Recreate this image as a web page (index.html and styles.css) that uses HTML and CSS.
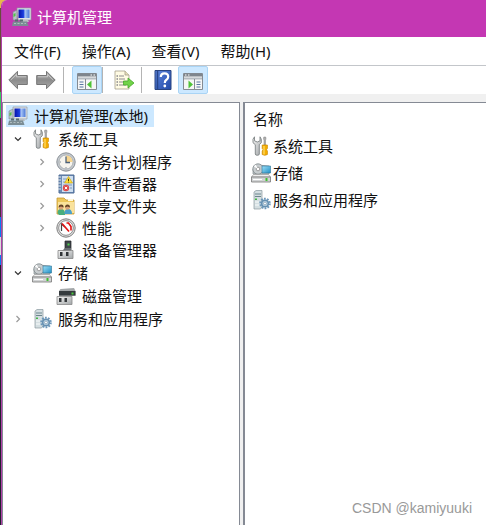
FILE: index.html
```html
<!DOCTYPE html>
<html lang="zh-CN">
<head>
    <meta charset="UTF-8">
    <meta name="viewport" content="width=device-width, initial-scale=1.0">
    <title>计算机管理</title>
    <link rel="stylesheet" href="styles.css">
</head>
<body>
    <svg class="sprite" aria-hidden="true">
        <defs>
            <linearGradient id="metal" x1="0" y1="0" x2="1" y2="1">
                <stop offset="0" stop-color="#f4f4f4"/>
                <stop offset="1" stop-color="#a2a6a8"/>
            </linearGradient>
            <linearGradient id="screen" x1="0" y1="0" x2="1" y2="0">
                <stop offset="0" stop-color="#0712a8"/>
                <stop offset="0.45" stop-color="#1c3fe0"/>
                <stop offset="0.6" stop-color="#a9c6f5"/>
                <stop offset="1" stop-color="#4a78d8"/>
            </linearGradient>
            <linearGradient id="arrow" x1="0" y1="0" x2="0" y2="1">
                <stop offset="0" stop-color="#b5b5b5"/>
                <stop offset="0.5" stop-color="#8c8c8c"/>
                <stop offset="1" stop-color="#a8a8a8"/>
            </linearGradient>
            <linearGradient id="book" x1="0" y1="0" x2="1" y2="1">
                <stop offset="0" stop-color="#5f86dc"/>
                <stop offset="1" stop-color="#2149a8"/>
            </linearGradient>
            <linearGradient id="cyan" x1="0" y1="0" x2="1" y2="1">
                <stop offset="0" stop-color="#9fe0f7"/>
                <stop offset="1" stop-color="#1f8fc6"/>
            </linearGradient>
        </defs>

        <symbol id="computer" viewBox="0 0 20 20">
            <path d="M1 5l4-2v10H1z" fill="#b9c3c8" stroke="#7d888e" stroke-width=".6"/>
            <path d="M1.500 7l2-1v3l-2 1z" fill="#55c04a"/>
            <path d="M5 1h14v12H6z" fill="#dfe3e6" stroke="#9299a0" stroke-width=".7"/>
            <path d="M6.500 2.500h11v8.500h-11z" fill="url(#screen)"/>
            <path d="M10 13h6l1 2H9z" fill="#b8bec2"/>
            <path d="M1 14.500h14l1.500 4.500H0z" fill="#7b8d94"/>
            <path d="M3 12.500h3v2H3zM8 12.500h3v2H8z" fill="#596b72"/>
            <path d="M2 16.500h12" stroke="#aebcbf" stroke-dasharray="2 1.500"/>
        </symbol>

        <symbol id="tools" viewBox="0 0 20 20">
            <path d="M3.500 .8L2 3.200v3.500l2.300 2V18q0 1.300 2 1.300t2-1.300V8.700l2-2V3.200L9 .8v4L6.300 6 3.500 4.800z" fill="url(#metal)" stroke="#7e8384" stroke-width=".9"/>
            <path d="M12.800 1h1.900l.3 2-.5 1v5.500h-1.500V4l-.5-1z" fill="#b0b0b0" stroke="#808080" stroke-width=".5"/>
            <path d="M11.200 9h5.200v3.500l-.9 1.200.9 1.300v3.500q-2.600 1.600-5.200 0V15l.9-1.300-.9-1.200z" fill="#f5ae00" stroke="#c98600" stroke-width=".7"/>
            <path d="M13 10v8.500" stroke="#ffe584"/>
        </symbol>

        <symbol id="clock" viewBox="0 0 20 20">
            <circle cx="10" cy="10" r="9.200" fill="#c4c9ce" stroke="#898f95"/>
            <circle cx="10" cy="10" r="7" fill="#f7f5ee" stroke="#9ca2a8" stroke-width=".7"/>
            <path d="M10 10V3.400a6.600 6.600 0 0 1 6.600 6.600z" fill="#f7d58e"/>
            <path d="M10 4.500V10.500h4" fill="none" stroke="#4b6079" stroke-width="1.300"/>
            <path d="M10 15v1.500M3.700 10h1.300" stroke="#8994a0"/>
        </symbol>

        <symbol id="events" viewBox="0 0 20 20">
            <path d="M3 1h15v18H3z" fill="#6c8cb6" stroke="#4e6c96"/>
            <path d="M6 2h11v16H6z" fill="#cfdff0"/>
            <path d="M7 5h4M7 8h3M7 11h9M7 14h2M14 14h2" stroke="#7e9bbd"/>
            <path d="M2 3h3M2 6h3M2 9h3M2 12h3M2 15h3" stroke="#e4e9ee"/>
            <path d="M12.500 2.500l4 6.500h-8z" fill="#ffe03b" stroke="#c99d00" stroke-width=".6"/>
            <path d="M12.500 4.800v2.200M12.500 7.700v.7" stroke="#4c4100"/>
            <circle cx="10" cy="14" r="3.200" fill="#dd4c4c"/>
            <path d="M8.800 12.800l2.400 2.400M11.200 12.800l-2.400 2.400" stroke="#fff"/>
        </symbol>

        <symbol id="shared" viewBox="0 0 20 20">
            <path d="M1 4V2h7l2 2h8v14H1z" fill="#edc75b" stroke="#c79b32" stroke-width=".8"/>
            <path d="M2 6h16v11H2z" fill="#fae29b"/>
            <path d="M12 3h5v2h-5z" fill="#fff8dd"/>
            <path d="M1.500 17q0-4 3.500-4t4 4v2h-6z" fill="#48ae7c"/>
            <path d="M8.500 17q0-4 3.500-4t4 4v1h-7.500z" fill="#4aa0c9"/>
            <circle cx="5" cy="11.500" r="2.200" fill="#dba278"/>
            <circle cx="11.500" cy="11.500" r="2.200" fill="#dba278"/>
            <path d="M2.600 11.500q0-3 2.600-3t2.400 3L5 10.500zM9 11.500q0-3 2.500-3t2.500 3l-2.500-1z" fill="#644326"/>
        </symbol>

        <symbol id="gauge" viewBox="0 0 20 20">
            <circle cx="10" cy="10" r="9.200" fill="#dcdcdc" stroke="#808080"/>
            <circle cx="10" cy="10" r="7.300" fill="#fff" stroke="#777" stroke-width=".8"/>
            <path d="M5.500 13V6l3.500 3" fill="none" stroke="#444" stroke-width="1.200"/>
            <path d="M6 5.500l7 8" stroke="#e21212" stroke-width="1.600"/>
            <path d="M10.500 5h2l2.500 3.500v4" fill="none" stroke="#e21212" stroke-width="1.600"/>
        </symbol>

        <symbol id="device" viewBox="0 0 20 20">
            <path d="M9 1h6v9H9z" fill="#40464b" stroke="#1f2326" stroke-width=".7"/>
            <path d="M11.500 3.500h2v2h-2z" fill="#4fd34f"/>
            <path d="M9 8l-3 3h9V8z" fill="#696f73"/>
            <path d="M2 10.500h15v8H2z" fill="url(#metal)" stroke="#858585" stroke-width=".8"/>
            <path d="M4 12h2.500v4H4zM10 12h2.500v4H10z" fill="#303437"/>
        </symbol>

        <symbol id="storage" viewBox="0 0 20 20">
            <path d="M2 6l4-4 12 1v8H2z" fill="#c1c6c8" stroke="#858c90" stroke-width=".7"/>
            <circle cx="7" cy="6" r="5.200" fill="#c8cdcf" stroke="#7e8689" stroke-width=".8"/>
            <circle cx="7" cy="6" r="1.800" fill="#fff" stroke="#808080" stroke-width=".7"/>
            <path d="M3 3.500l4 2.500-2.500-4.500z" fill="#fff"/>
            <path d="M11 3h8.500v7H11z" fill="url(#cyan)" stroke="#2d7397" stroke-width=".6"/>
            <path d="M2.500 11.500h15l2 2.500H.5z" fill="#f0f0f0" stroke="#8c8c8c" stroke-width=".6"/>
            <path d="M.5 14h19v5H.5z" fill="#d2d4d5" stroke="#777" stroke-width=".8"/>
            <path d="M2 16.500h9" stroke="#fff"/>
            <path d="M14.500 15h2v3h-2z" fill="#42bf32"/>
        </symbol>

        <symbol id="disk" viewBox="0 0 20 20">
            <path d="M4.500 3L18 2l1.500 3v5H3V5z" fill="#a3a7a9"/>
            <path d="M3 5h16.500v4.500H3z" fill="#343a3d"/>
            <path d="M15.500 6.500h2v2h-2z" fill="#49cc3c"/>
            <path d="M1 10.500h15v8H1z" fill="url(#metal)" stroke="#898989" stroke-width=".8"/>
            <path d="M3 12h2.500v4H3zM8.500 12H11v4H8.500z" fill="#34383b"/>
        </symbol>

        <symbol id="services" viewBox="0 0 20 20">
            <path d="M3 2l2-1.500h6V17l-1.500 2H3z" fill="#d4dee1" stroke="#8a999f" stroke-width=".7"/>
            <path d="M4 4h6M4 6.500h6" stroke="#6d868e"/>
            <path d="M4 8.500h2v1.500H4z" fill="#43b847"/>
            <path d="M4 12h6M4 15h5" stroke="#f8fbfb"/>
            <circle cx="14" cy="13.500" r="4.800" fill="none" stroke="#6c97ba" stroke-width="2" stroke-dasharray="1.800 1.200"/>
            <circle cx="14" cy="13.500" r="3.300" fill="#c1d7e7" stroke="#6690b1" stroke-width="1.600"/>
            <circle cx="14" cy="13.500" r="1.400" fill="#fff" stroke="#6b89a1" stroke-width=".6"/>
        </symbol>

        <symbol id="back" viewBox="0 0 20 20">
            <path d="M.8 10L9.500 1.300V5.500H19.300v9H9.500v4.200z" fill="url(#arrow)" stroke="#777"/>
            <path d="M2.800 10l5.700-5.500v2.300h9.500" fill="none" stroke="#d0d0d0" stroke-width=".8"/>
        </symbol>

        <symbol id="export" viewBox="0 0 20 20">
            <path d="M1 1h10l4 4v14H1z" fill="#fffbe3" stroke="#a4a08a" stroke-width=".8"/>
            <path d="M11 1v4h4" fill="#e5deb9" stroke="#a4a08a" stroke-width=".8"/>
            <path d="M5 6h5M5 9h6M5 12h5M5 15h7" stroke="#8c8b91"/>
            <path d="M2.500 6H4M2.500 9H4M2.500 12H4M2.500 15H4" stroke="#4d4d61"/>
            <path d="M9.500 11H14V8l6 5-6 5v-3H9.500z" fill="#71d348" stroke="#48a62b" stroke-width=".8"/>
        </symbol>

        <symbol id="help" viewBox="0 0 20 20">
            <path d="M2 .5h16v19H2z" fill="url(#book)" stroke="#294480"/>
            <path d="M4.500 1v18" stroke="#274589" stroke-width="1.500"/>
            <path d="M7.800 7q0-3.700 3.700-3.700t3.700 3.400q0 2-2 3.300-1.400.9-1.400 2.900" fill="none" stroke="#fff" stroke-width="2.200"/>
            <circle cx="11.800" cy="16" r="1.400" fill="#fff"/>
        </symbol>

        <symbol id="panel" viewBox="0 0 20 20">
            <path d="M.5 3.500h19v16H.5z" fill="#f6f6f6" stroke="#858b92"/>
            <path d="M1 3.500h18v3H1z" fill="#7e858d"/>
            <path d="M1 7.500h18v2H1z" fill="#b5bbc1"/>
            <path d="M13.500 5H15M16.500 5H18" stroke="#fff"/>
            <path d="M8.500 9v10" stroke="#858b92"/>
            <path d="M2.500 12h4M2.500 14.500h4M2.500 17h4" stroke="#5875a1"/>
            <path d="M14.500 10.500v8l-4.500-4z" fill="#4fc336"/>
        </symbol>

        <symbol id="chevron" viewBox="0 0 10 10">
            <path d="M3.500 2l3 3-3 3" fill="none" stroke="currentColor" stroke-width="1.200"/>
        </symbol>
    </svg>

    <div class="window">
        <header class="titlebar">
            <svg class="icon"><use href="#computer"/></svg>
            <h1>计算机管理</h1>
        </header>

        <nav class="menubar">
            <button type="button">文件(F)</button>
            <button type="button">操作(A)</button>
            <button type="button">查看(V)</button>
            <button type="button">帮助(H)</button>
        </nav>

        <div class="toolbar" role="toolbar" aria-label="工具栏">
            <button type="button" aria-label="后退"><svg class="icon"><use href="#back"/></svg></button>
            <button type="button" aria-label="前进"><svg class="icon flip"><use href="#back"/></svg></button>
            <span class="separator"></span>
            <button type="button" class="pressed" aria-label="显示控制台树"><svg class="icon"><use href="#panel"/></svg></button>
            <span class="separator"></span>
            <button type="button" aria-label="导出列表"><svg class="icon"><use href="#export"/></svg></button>
            <span class="separator"></span>
            <button type="button" aria-label="帮助"><svg class="icon"><use href="#help"/></svg></button>
            <button type="button" class="pressed" aria-label="显示操作窗格"><svg class="icon flip"><use href="#panel"/></svg></button>
        </div>

        <main class="panes">
            <section class="pane">
                <div class="tree-root"><svg class="icon"><use href="#computer"/></svg>计算机管理(本地)</div>
                <ul class="tree">
                    <li>
                        <div class="node">
                            <button type="button" class="toggle open" aria-label="折叠系统工具"><svg><use href="#chevron"/></svg></button>
                            <svg class="icon"><use href="#tools"/></svg>系统工具
                        </div>
                        <ul>
                            <li class="node">
                                <button type="button" class="toggle" aria-label="展开任务计划程序"><svg><use href="#chevron"/></svg></button>
                                <svg class="icon"><use href="#clock"/></svg>任务计划程序
                            </li>
                            <li class="node">
                                <button type="button" class="toggle" aria-label="展开事件查看器"><svg><use href="#chevron"/></svg></button>
                                <svg class="icon"><use href="#events"/></svg>事件查看器
                            </li>
                            <li class="node">
                                <button type="button" class="toggle" aria-label="展开共享文件夹"><svg><use href="#chevron"/></svg></button>
                                <svg class="icon"><use href="#shared"/></svg>共享文件夹
                            </li>
                            <li class="node">
                                <button type="button" class="toggle" aria-label="展开性能"><svg><use href="#chevron"/></svg></button>
                                <svg class="icon"><use href="#gauge"/></svg>性能
                            </li>
                            <li class="node leaf"><svg class="icon"><use href="#device"/></svg>设备管理器</li>
                        </ul>
                    </li>
                    <li>
                        <div class="node">
                            <button type="button" class="toggle open" aria-label="折叠存储"><svg><use href="#chevron"/></svg></button>
                            <svg class="icon"><use href="#storage"/></svg>存储
                        </div>
                        <ul>
                            <li class="node leaf"><svg class="icon"><use href="#disk"/></svg>磁盘管理</li>
                        </ul>
                    </li>
                    <li>
                        <div class="node">
                            <button type="button" class="toggle" aria-label="展开服务和应用程序"><svg><use href="#chevron"/></svg></button>
                            <svg class="icon"><use href="#services"/></svg>服务和应用程序
                        </div>
                    </li>
                </ul>
            </section>

            <section class="pane">
                <table class="list">
                    <thead>
                        <tr><th scope="col">名称</th></tr>
                    </thead>
                    <tbody>
                        <tr><td><svg class="icon"><use href="#tools"/></svg>系统工具</td></tr>
                        <tr><td><svg class="icon"><use href="#storage"/></svg>存储</td></tr>
                        <tr><td><svg class="icon"><use href="#services"/></svg>服务和应用程序</td></tr>
                    </tbody>
                </table>
            </section>
        </main>
    </div>

    <div class="watermark">CSDN @kamiyuuki</div>
</body>
</html>
```

FILE: styles.css
```css
* {
    box-sizing: border-box;
}
body {
    margin: 0;
    font-family: "Noto Sans", "Noto Sans CJK SC", sans-serif;
    font-size: 15px;
    line-height: 22px;
    color: #111;
    /* strip of desktop left of the window */
    background: linear-gradient(#e8b84a 0 8px, #6b4a3c 8px 92px, #38c860 92px 118px, #4a3040 118px 217px, #0a7cf0 217px 237px, #dcdcdc 237px 255px, #0a7cf0 255px 265px, #20202c 265px);
}
button {
    padding: 0;
    border: 0;
    background: none;
    font: inherit;
    color: inherit;
}
ul {
    margin: 0;
    padding: 0;
    list-style: none;
}
.sprite {
    position: absolute;
    width: 0;
    height: 0;
}
.icon {
    display: block;
    flex: none;
    width: 20px;
    height: 20px;
}
.flip {
    transform: scaleX(-1);
}
.window {
    display: flex;
    flex-direction: column;
    min-height: 100vh;
    margin-left: 1px;
    border-left: 1px solid #b040a8;
    border-top-left-radius: 6px;
    background: #f0f0f0;
    overflow: hidden;
}
.titlebar {
    display: flex;
    align-items: center;
    gap: 5px;
    height: 37px;
    padding: 0 10px 4px;
    background: #c437b3;
    color: #fff;
}
.titlebar h1 {
    margin: 0;
    font-size: 15px;
    font-weight: normal;
}
.menubar {
    display: flex;
    gap: 21px;
    padding: 3px 12px;
    border-bottom: 1px solid #c3c6ca;
    background: #fff;
}
.toolbar {
    display: flex;
    align-items: center;
    gap: 8px;
    height: 28px;
    padding: 0 6px;
    background: #fff;
}
.toolbar .separator {
    width: 1px;
    height: 26px;
    margin-left: -1px;
    background: #b4b4b4;
}
.toolbar .separator + button:not(.pressed) {
    margin-left: 3px;
}
.toolbar .pressed {
    padding: 3px 4px;
    border: 1px solid #a9d4f5;
    border-radius: 2px;
    background: #cce8ff;
}
.toolbar .pressed + .separator {
    margin-left: -8px;
}
.toolbar button + .pressed {
    margin-left: -3px;
}
.panes {
    display: grid;
    grid-template-columns: minmax(0, 238fr) minmax(0, 243fr);
    gap: 3px;
    flex: 1;
    margin-top: 8px;
}
.pane {
    border: 1px solid #858a94;
    border-width: 1px 1px 0;
    background: #fff;
}
.pane:last-child {
    border-width: 1px 0 0 2px;
}
.tree-root {
    display: flex;
    align-items: center;
    gap: 6px;
    width: fit-content;
    margin: 2px 3px 1px;
    padding: 0 6px 0 2px;
    background: #cce8ff;
    white-space: nowrap;
}
.tree {
    padding-left: 5px;
}
.tree ul {
    padding: 1px 0 1px 24px;
}
.node {
    display: flex;
    align-items: center;
    height: 22px;
    white-space: nowrap;
}
.node .icon {
    margin: 0 6px 0 4px;
}
.leaf {
    padding-left: 20px;
}
.toggle {
    display: flex;
    align-items: center;
    justify-content: center;
    width: 20px;
    height: 22px;
    color: #999;
}
.toggle svg {
    width: 10px;
    height: 10px;
}
.toggle.open {
    color: #333;
}
.toggle.open svg {
    transform: rotate(90deg);
}
.list {
    width: 100%;
    margin-top: 3px;
    border-collapse: collapse;
}
.list th {
    padding: 2px 8px;
    font-weight: normal;
    text-align: left;
}
.list td {
    display: flex;
    align-items: center;
    gap: 2px;
    height: 27px;
    padding: 0 6px;
}
.watermark {
    position: absolute;
    right: 14px;
    bottom: 6px;
    font-family: "Liberation Sans", sans-serif;
    font-size: 14px;
    color: #999;
}
```
